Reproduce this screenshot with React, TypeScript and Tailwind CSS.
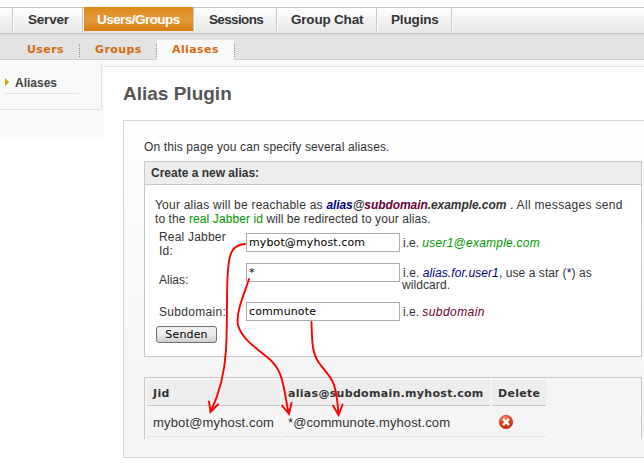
import React from "react";

const arial = "font-['Liberation_Sans',Arial,sans-serif]";
const verdana = "font-['DejaVu_Sans',Verdana,sans-serif]";

function NavTab({ label, className, text, active = false }: { label: string; className: string; text: string; active?: boolean }) {
  return (
    <a className={`flex h-[25px] shrink-0 border-r border-[#c8c8c8] ${className}`}>
      <span className={`block h-full w-full border-l border-white text-[13.5px] leading-[24px] font-bold whitespace-nowrap ${active ? "text-white" : "text-[#333]"}`}>
        <span className={`block ${active ? "-mt-px h-[24px] bg-linear-to-b from-[#de8712] via-[#e59a38] to-[#d97c00] leading-[26px]" : ""} ${text}`}>{label}</span>
      </span>
    </a>
  );
}

function Field({ value, className = "" }: { value: string; className?: string }) {
  return (
    <div className={`h-[19px] w-[154px] shrink-0 border border-[#abadb3] bg-white pl-[2px] text-[11px] leading-[18px] tracking-[0.12px] text-black ${verdana} ${className}`}>{value}</div>
  );
}

function DeleteIcon() {
  return (
    <svg width="16" height="16" viewBox="0 0 16 16">
      <defs>
        <radialGradient id="red" cx="0.4" cy="0.2" r="0.85">
          <stop offset="0" stopColor="#ff8a70" />
          <stop offset="0.5" stopColor="#ee3c1a" />
          <stop offset="1" stopColor="#c02000" />
        </radialGradient>
      </defs>
      <circle cx="8" cy="8" r="6.8" fill="url(#red)" stroke="#b8422c" strokeWidth="0.6" />
      <path d="M5.800 5.800 10.200 10.200M10.200 5.800 5.800 10.200" stroke="#fff" strokeWidth="2.4" strokeLinecap="square" />
    </svg>
  );
}

export default function App() {
  return (
    <div className={`relative h-[473px] w-[644px] overflow-hidden bg-white pt-[7px] text-[12px] text-[#333] ${arial}`}>
      <nav className="flex h-[27px] border-y border-[#c5c5c5] bg-linear-to-b from-white to-[#e6e6e6]">
        <div className="h-[25px] w-[13px] shrink-0 border-r border-[#c8c8c8]" />
        <NavTab label="Server" className="w-[70px]" text="pl-[14px] tracking-[-0.2px]" />
        <NavTab label="Users/Groups" className="w-[111px]" text="pl-[13px] tracking-[-0.55px]" active />
        <NavTab label="Sessions" className="w-[83px]" text="pl-[14px] tracking-[-0.65px]" />
        <NavTab label="Group Chat" className="w-[100px]" text="pl-[13px] tracking-[-0.2px]" />
        <NavTab label="Plugins" className="w-[75px]" text="pl-[13px] tracking-[-0.15px]" />
        <div className="h-[25px] w-px bg-white" />
      </nav>

      <div className={`flex h-[26px] border-b border-[#ccc] bg-linear-to-b from-[#d8d8d8] via-[#e3e3e3] via-10% to-[#e3e3e3] text-[11px] leading-[20px] font-bold tracking-[0.4px] text-[#d76c0d] ${verdana}`}>
        <div className="mt-[6px] h-[20px] w-[79px] pl-[27px]">Users</div>
        <div className="mt-[10px] h-[13px] border-l border-dotted border-[#6f98a5]" />
        <div className="mt-[6px] h-[20px] w-[76px] pl-[15px]">Groups</div>
        <div className="mt-[10px] h-[13px] border-l border-dotted border-[#6f98a5]" />
        <div className="mt-[6px] h-[21px] w-[77px] bg-[#f9f9f9] pl-[15px]">Aliases</div>
        <div className="mt-[10px] h-[13px] border-l border-dotted border-[#6f98a5]" />
      </div>

      <div className="flex bg-[linear-gradient(#f9f9f9,#f9f9f9)] bg-[length:100%_77px] bg-no-repeat">
        <aside className="w-[102px] shrink-0 pt-[2px]">
          <div className="h-[48px] border-r border-b border-[#e3e3e3] pt-[11px] pl-[5px]">
            <div className="flex h-[21px] w-[74px] border-b border-[#e3e3e3]">
              <svg className="mt-[5px]" width="4" height="8" viewBox="0 0 4 8"><path d="M0 0 4 4 0 8z" fill="#d49f00" /></svg>
              <span className="pt-px pl-[6px] text-[12px] leading-[19px] font-bold text-[#444]">Aliases</span>
            </div>
          </div>
        </aside>
        <main className="mt-[6px] h-[407px] w-[542px] rounded-tl-[4px] border-t border-[#e3e3e3] pl-[2px]">
          <div className="h-[406px] rounded-tl-[2px] bg-white pl-[19px]">
            <h1 className="h-[53px] pt-[15px] text-[19px] leading-[24px] font-bold text-[#555]">Alias Plugin</h1>
            <section className="h-[338px] w-[530px] border border-[#d6d6d6] bg-linear-to-b from-[#fefefe] via-[#f6f6f6] via-70% to-[#f4f4f4] pt-[18px] pl-[20px]">
              <p className="h-[22px] leading-[16px] tracking-[0.12px]">On this page you can specify several aliases.</p>

              <div className="h-[196px] w-[498px] border border-[#c8c8c8] bg-white">
                <h2 className="h-[23px] border-b border-[#c8c8c8] bg-[#ededed] pl-[6px] leading-[23px] font-bold">Create a new alias:</h2>
                <p className="h-[46px] pt-[13px] pl-[10px] leading-[14px] whitespace-nowrap">
                  <span className="block tracking-[0.22px]">
                    Your alias will be reachable as{" "}
                    <b className="tracking-[-0.07px] italic"><span className="text-[#000080]">alias</span>@<span className="text-[#660033]">subdomain</span>.example.com</b>
                    <span className="tracking-[0.32px]"> . All messages send</span>
                  </span>
                  <span className="block tracking-[0.09px]">to the <span className="text-[#090]">real Jabber id</span> will be redirected to your alias.</span>
                </p>
                <div className="flex h-[32px] pl-[14px]">
                  <div className="-mt-[1px] w-[87px] leading-[14px] tracking-[0.2px]">Real Jabber<br />Id:</div>
                  <Field value="mybot@myhost.com" className="mt-[2px]" />
                  <div className="pt-[4px] pl-[3px] leading-[16px]">i.e. <i className="tracking-[0.24px] text-[#090]">user1@example.com</i></div>
                </div>
                <div className="flex h-[39px] pl-[14px]">
                  <div className="w-[87px] pt-[9px] leading-[16px]">Alias:</div>
                  <Field value="*" />
                  <div className="pt-[4px] pl-[3px] leading-[12px] tracking-[0.08px] whitespace-nowrap">i.e. <i className="text-[#000080]">alias.for.user1</i>, use a star (<span className="text-[#000080]">*</span>) as<br /><span className="-ml-px">wildcard.</span></div>
                </div>
                <div className="flex h-[24px] pl-[14px]">
                  <div className="w-[87px] pt-[2px] leading-[16px] tracking-[0.3px]">Subdomain:</div>
                  <Field value="communote" />
                  <div className="pt-[2px] pl-[3px] leading-[16px]">i.e. <i className="tracking-[0.42px] text-[#660033]">subdomain</i></div>
                </div>
                <button className={`ml-[11px] block h-[17px] w-[61px] rounded-[3px] border border-[#707070] bg-linear-to-b from-[#f2f2f2] via-[#ebebeb] to-[#cfcfcf] text-center text-[11px] leading-[16px] tracking-[0.15px] text-black ${verdana}`}>Senden</button>
              </div>

              <div className="mt-[20px] h-[62px] w-[498px] border border-b-0 border-[#c8c8c8] pt-[2px] pl-[2px]">
                <div className={`flex h-[26px] gap-[2px] text-[11px] leading-[27px] font-bold tracking-[0.3px] ${verdana}`}>
                  <div className="w-[133px] border-b border-[#c8c8c8] bg-[#ededed] pl-[6px]">Jid</div>
                  <div className="w-[208px] border-b border-[#c8c8c8] bg-[#ededed] pl-[6px]">alias@subdomain.myhost.com</div>
                  <div className="w-[54px] border-b border-[#c8c8c8] bg-[#ededed] pl-[6px]">Delete</div>
                </div>
                <div className="flex h-[31px] gap-[2px] text-[13px] leading-[33px]">
                  <div className="w-[133px] border-b border-[#e3e3e3] pl-[6px] tracking-[0.15px]">mybot@myhost.com</div>
                  <div className="w-[208px] border-b border-[#e3e3e3] pl-[6px] tracking-[0.1px]">*@communote.myhost.com</div>
                  <div className="w-[54px] border-b border-[#e3e3e3] pt-[8px] pl-[6px]"><DeleteIcon /></div>
                </div>
              </div>
            </section>
          </div>
        </main>
      </div>

      <svg className="absolute top-0 left-0" width="644" height="473" fill="none" stroke="#f00" strokeWidth="1.9" strokeLinecap="round">
        <path d="M245 244C232 245 228.500 252 227.500 278C226.500 300 227.500 325 226 350C224.500 376 219 394 211 411M209 401.500 210.500 412 218 404.500" />
        <path d="M249 279C245 292 235.500 312 238 325C241 338 257 349 267 357C283 369 283 384 288.500 413M282 405.500 289 414 291.500 403" />
        <path d="M311.500 322C312 342 312 353 319 363C331 379 336 378 338.500 414M333 405.500 338.500 415 342.500 404.500" />
      </svg>
    </div>
  );
}
